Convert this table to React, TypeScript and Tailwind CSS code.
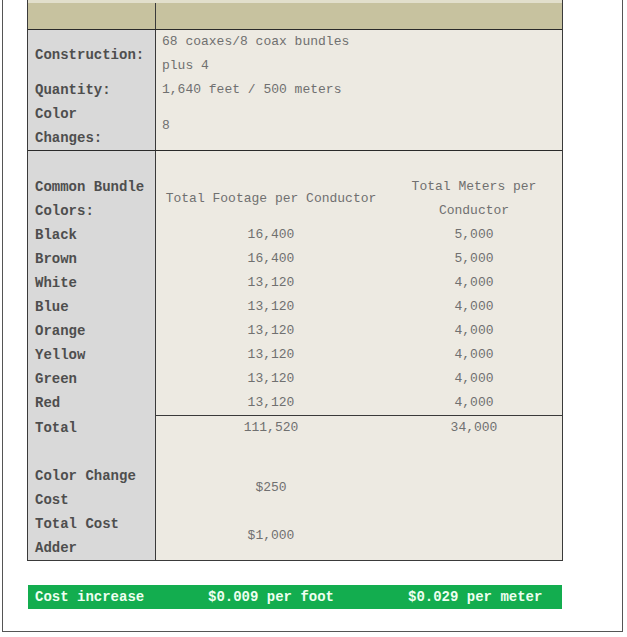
import React from "react";

const mono = { fontFamily: '"Liberation Mono", "DejaVu Sans Mono", monospace' };

const colors: [string, string, string][] = [
  ["Black", "16,400", "5,000"],
  ["Brown", "16,400", "5,000"],
  ["White", "13,120", "4,000"],
  ["Blue", "13,120", "4,000"],
  ["Orange", "13,120", "4,000"],
  ["Yellow", "13,120", "4,000"],
  ["Green", "13,120", "4,000"],
  ["Red", "13,120", "4,000"],
];

function Label({ children }: { children: React.ReactNode }) {
  return (
    <div className="w-[128px] shrink-0 pl-[7px] text-[14px] leading-[24px] font-bold text-[#4e4e4e] border-r border-[#3a3a3a] bg-[#d9d9d9]">
      {children}
    </div>
  );
}

export default function App() {
  return (
    <div className="bg-white w-[627px] h-[637px]" style={mono}>
      <div className="ml-[2px] w-[621px] h-[632px] border-l border-r border-b border-[#555] bg-white">
        <div className="ml-[24px] w-[536px] border-l border-r border-b border-[#3a3a3a]">
          {/* header */}
          <div className="flex h-[30px] border-t-[3px] border-t-[#e2dfcc] border-b border-b-[#2a2a2a] bg-[#c7c29f]">
            <div className="w-[128px] border-r border-[#3a3a3a]" />
            <div className="flex-1" />
          </div>

          {/* section 2 */}
          <div className="flex border-b border-[#2a2a2a]">
            <div className="w-[128px] shrink-0 pl-[7px] text-[14px] leading-[24px] font-bold text-[#4e4e4e] border-r border-[#3a3a3a] bg-[#d9d9d9]">
              <div className="h-[48px] flex items-center pt-[2px]">Construction:</div>
              <div>Quantity:</div>
              <div>Color</div>
              <div>Changes:</div>
            </div>
            <div className="flex-1 bg-[#edeae2] pl-[6px] text-[13px] leading-[24px] text-[#707070]">
              <div>68 coaxes/8 coax bundles</div>
              <div>plus 4</div>
              <div>1,640 feet / 500 meters</div>
              <div className="h-[48px] flex items-center">8</div>
            </div>
          </div>

          {/* section 3 */}
          <div className="flex flex-col">
            <div className="flex h-[24px]">
              <Label>{""}</Label>
              <div className="flex-1 bg-[#edeae2]" />
            </div>
            <div className="flex">
              <Label>
                <div>Common Bundle</div>
                <div>Colors:</div>
              </Label>
              <div className="flex-1 flex bg-[#edeae2] text-[13px] leading-[24px] text-[#707070]">
                <div className="w-[230px] flex items-center justify-center">Total Footage per Conductor</div>
                <div className="flex-1 text-center">
                  Total Meters per
                  <br />
                  Conductor
                </div>
              </div>
            </div>
            {colors.map(([c, f, m]) => (
              <div key={c} className="flex">
                <Label>{c}</Label>
                <div className="flex-1 flex bg-[#edeae2] text-[13px] leading-[24px] text-[#707070]">
                  <div className="w-[230px] text-center">{f}</div>
                  <div className="flex-1 text-center">{m}</div>
                </div>
              </div>
            ))}
            <div className="flex">
              <Label>
                <div className="pt-[1px]">Total</div>
              </Label>
              <div className="flex-1 flex bg-[#edeae2] border-t border-[#3a3a3a] text-[13px] leading-[24px] text-[#707070]">
                <div className="w-[230px] text-center">111,520</div>
                <div className="flex-1 text-center">34,000</div>
              </div>
            </div>
            <div className="flex h-[24px]">
              <Label>{""}</Label>
              <div className="flex-1 bg-[#edeae2]" />
            </div>
            <div className="flex">
              <Label>
                <div>Color Change</div>
                <div>Cost</div>
              </Label>
              <div className="flex-1 flex bg-[#edeae2] text-[13px] leading-[24px] text-[#707070]">
                <div className="w-[230px] flex items-center justify-center">$250</div>
              </div>
            </div>
            <div className="flex">
              <Label>
                <div>Total Cost</div>
                <div>Adder</div>
              </Label>
              <div className="flex-1 flex bg-[#edeae2] text-[13px] leading-[24px] text-[#707070]">
                <div className="w-[230px] flex items-center justify-center">$1,000</div>
              </div>
            </div>
          </div>
        </div>

        {/* green bar */}
        <div className="ml-[25px] mt-[24px] w-[534px] h-[24px] bg-[#13ad4f] flex items-center pl-[7px] text-[14px] font-bold text-[#eefff0]">
          <div className="w-[173px]">Cost increase</div>
          <div className="w-[200px]">$0.009 per foot</div>
          <div>$0.029 per meter</div>
        </div>
      </div>
    </div>
  );
}
